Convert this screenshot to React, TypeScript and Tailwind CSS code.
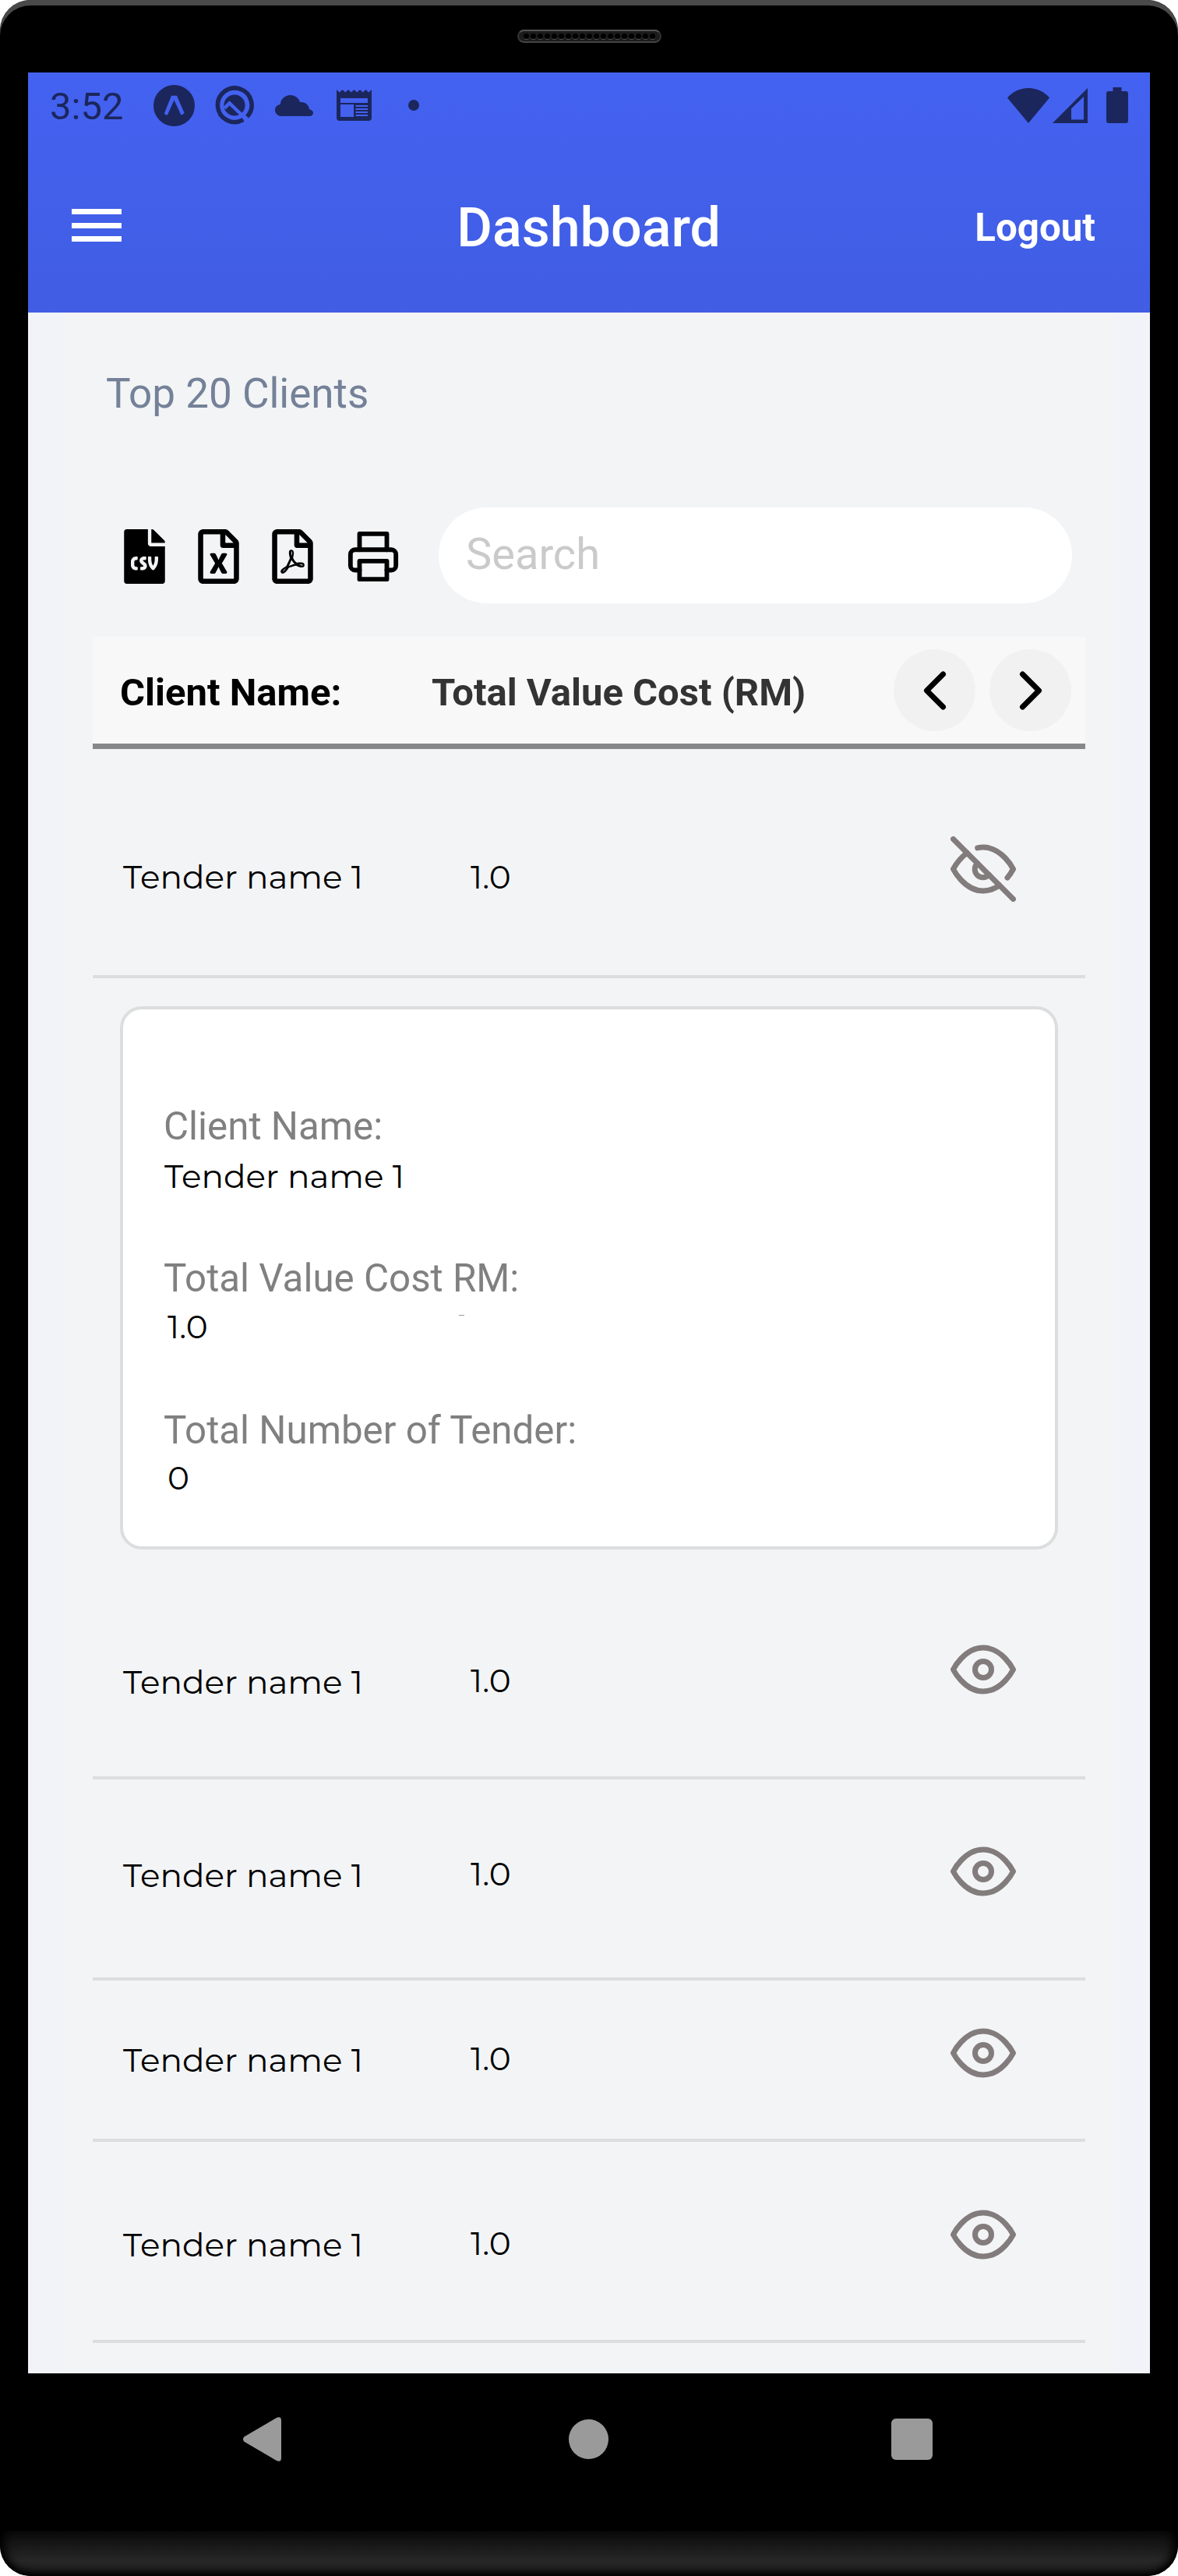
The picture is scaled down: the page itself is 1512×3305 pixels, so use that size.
import { FaFileCsv, FaRegFileExcel, FaRegFilePdf } from "react-icons/fa";
import { FiChevronLeft, FiChevronRight, FiEye, FiEyeOff, FiPrinter } from "react-icons/fi";

type RowProps = {
  height: string;
  namePad: string;
  valuePad: string;
  eyePad: string;
  open?: boolean;
};

const rows: RowProps[] = [
  { height: "h-[295px]", namePad: "pt-[145px]", valuePad: "pt-[143px]", eyePad: "pt-[112px]" },
  { height: "h-[258px]", namePad: "pt-[98px]", valuePad: "pt-[96px]", eyePad: "pt-[76px]" },
  { height: "h-[207px]", namePad: "pt-[77px]", valuePad: "pt-[75px]", eyePad: "pt-[51px]" },
  { height: "h-[258px]", namePad: "pt-[107px]", valuePad: "pt-[105px]", eyePad: "pt-[77px]" },
];

const details = [
  { label: "Client Name:", value: "Tender name 1", indent: "pl-[1px]", gap: "gap-[10px]" },
  { label: "Total Value Cost RM:", value: "1.0", indent: "pl-[5px]", gap: "gap-[8px] mt-[77px]" },
  { label: "Total Number of Tender:", value: "0", indent: "pl-[5px]", gap: "gap-[7px] mt-[79px]" },
];

function TenderRow({ height, namePad, valuePad, eyePad, open }: RowProps) {
  return (
    <div
      className={`flex items-start border-b-4 border-[#dcddde] pl-[39px] font-['Montserrat','Inter',sans-serif] text-[42.200px] leading-[50px] text-black ${height}`}
    >
      <div className={`w-[446px] whitespace-nowrap ${namePad}`}>Tender name 1</div>
      <div className={`w-[616px] ${valuePad}`}>1.0</div>
      <div className={`text-[#827c7c] ${eyePad}`}>{open ? <FiEyeOff size={84} /> : <FiEye size={84} />}</div>
    </div>
  );
}

function Speaker() {
  return (
    <div className="flex h-[17px] w-[185px] items-center justify-center gap-[2px] rounded-full border-2 border-t-[#555] border-b-[#444] border-x-[#333] bg-[#1c1c1c]">
      {Array.from({ length: 19 }, (_, i) => (
        <span key={i} className="h-[8px] w-[7px] rounded-full border-b border-[#555] bg-black" />
      ))}
    </div>
  );
}

function StatusBar() {
  return (
    <div className="flex h-[84px] items-center justify-between pr-[28px] pl-[28px] text-[#1b265c]">
      <div className="flex items-center">
        <span className="w-[133px] pt-[3px] text-[49px] leading-[58px]">3:52</span>
        <svg width="53" height="53" viewBox="0 0 53 53">
          <circle cx="26.5" cy="26.5" r="26.5" fill="currentColor" />
          <path d="M13.700 37 23 13.700H30L39.700 36.300 35.500 38.800 26.500 19.500 17.700 39z" fill="#4361ee" />
        </svg>
        <svg className="ml-[26px]" width="50" height="50" viewBox="0 0 50 50">
          <path d="M36.2 43.6A21.8 21.8 0 1 1 41.2 39.6" fill="none" stroke="currentColor" strokeWidth="5.6" />
          <circle cx="25" cy="25" r="13.6" fill="currentColor" />
          <path d="M12.2 28.6 18.6 22.4 38 41" fill="none" stroke="#4361ee" strokeWidth="4.4" />
        </svg>
        <svg className="ml-[27px]" width="49" height="27" viewBox="0 0 49 27">
          <path
            d="M8.5 27C3.8 27 0 23.7 0 19.2 0 15.3 3 12.6 6.8 12 7 5 13 0 19.8 0 25.5 0 30.3 3.700 32 9 38.700 8.200 43.500 12.500 44 18.200 47 18.700 49 20.600 49 22.800 49 25.300 47 27 44.500 27z"
            fill="currentColor"
          />
        </svg>
        <svg className="ml-[30px]" width="45" height="40" viewBox="0 0 45 40">
          <path
            fillRule="evenodd"
            d="M0 0 3.700 3.500 7.500 0 11.200 3.500 15 0 18.700 3.500 22.500 0 26.200 3.500 30 0 33.700 3.500 37.500 0 41.200 3.500 45 0V36Q45 40 41 40H4Q0 40 0 36zM5 11V17H40V11zM5 19V35H22V19z"
            fill="currentColor"
          />
          <path d="M24.500 21H40M24.500 25H40M24.500 29H40M24.500 33H40" stroke="#4361ee" strokeWidth="2.200" />
        </svg>
        <span className="ml-[47px] size-[14px] rounded-full bg-[#1b265c]" />
      </div>
      <div className="flex items-center">
        <svg width="54" height="45" viewBox="0 0 54 45">
          <path d="M27 45 0 12.500C6 5 16 0 27 0S48 5 54 12.500z" fill="currentColor" />
        </svg>
        <svg className="ml-[4px]" width="45" height="45" viewBox="0 0 45 45">
          <path fillRule="evenodd" d="M0 45 45 0V45zM24 26.500V40.500H40V11z" fill="currentColor" />
        </svg>
        <svg className="ml-[24px]" width="28" height="46" viewBox="0 0 28 46">
          <path d="M8.500 0H19.500V5H25Q28 5 28 8V43Q28 46 25 46H3Q0 46 0 43V8Q0 5 3 5H8.500z" fill="currentColor" />
        </svg>
      </div>
    </div>
  );
}

function AppBar() {
  return (
    <div className="flex h-[224px] items-center justify-between pr-[70px] pl-[56px] text-white">
      <div className="flex w-[168px] flex-col gap-[10.500px]">
        <span className="h-[7px] w-[64px] bg-white" />
        <span className="h-[7px] w-[64px] bg-white" />
        <span className="h-[7px] w-[64px] bg-white" />
      </div>
      <h1 className="pt-[6px] text-[70px] leading-[84px] font-medium">Dashboard</h1>
      <button className="pt-[5px] text-[49.300px] leading-[58px] font-bold">Logout</button>
    </div>
  );
}

function Toolbar() {
  return (
    <div className="mt-[114px] flex h-[123px] items-center pr-[17px] pl-[40px] text-black">
      <div className="flex w-[404px] items-center pt-[2px]">
        <FaFileCsv className="h-[70px] w-[53px]" />
        <FaRegFileExcel className="ml-[42px] h-[70px] w-[53px]" />
        <FaRegFilePdf className="ml-[42px] h-[70px] w-[53px]" />
        <FiPrinter className="ml-[42px]" size={70} />
      </div>
      <div className="flex h-[123px] flex-1 items-center rounded-full bg-white pb-[3px] pl-[35px] text-[56px] leading-[66px] text-[#cacaca]">
        Search
      </div>
    </div>
  );
}

function TableHeader() {
  return (
    <div className="mt-[43px] flex h-[144px] items-center border-b-[7px] border-[#888] bg-[#f8f8f8] pr-[18px] pl-[35px] text-[49px] leading-[58px] font-bold">
      <div className="w-[400px] pt-[6px] text-black">Client Name:</div>
      <div className="flex-1 pt-[6px] text-[#333]">Total Value Cost (RM)</div>
      <div className="flex gap-[18px] text-black">
        <button className="flex size-[105px] items-center justify-center rounded-full bg-[#f1f1f1]">
          <FiChevronLeft size={84} />
        </button>
        <button className="flex size-[105px] items-center justify-center rounded-full bg-[#f1f1f1]">
          <FiChevronRight size={84} />
        </button>
      </div>
    </div>
  );
}

function DetailCard() {
  return (
    <div className="relative mt-[36px] ml-[35px] flex h-[697px] w-[1204px] flex-col rounded-[28px] border-4 border-[#dcddde] bg-white pt-[121px] pl-[52px]">
      {details.map((d) => (
        <div key={d.label} className={`flex flex-col ${d.gap}`}>
          <div className="text-[49.300px] leading-[58px] text-[#808080]">{d.label}</div>
          <div className={`font-['Montserrat','Inter',sans-serif] text-[42.200px] leading-[50px] text-black ${d.indent}`}>
            {d.value}
          </div>
        </div>
      ))}
      <span className="absolute top-[392px] left-[431px] h-px w-[7px] bg-[#999]" />
    </div>
  );
}

function NavBar() {
  return (
    <div className="flex h-[168px] items-center pl-[312px] text-[#9a9a9a]">
      <svg width="49" height="57" viewBox="0 0 49 57">
        <path d="M1.200 25.500 43 1Q49-1.500 49 4.500V52.500Q49 58.500 43 56L1.200 31.500Q-1.200 28.500 1.200 25.500z" fill="currentColor" />
      </svg>
      <span className="ml-[369px] size-[51px] rounded-full bg-[#9a9a9a]" />
      <span className="ml-[363px] size-[53px] rounded-[6px] bg-[#9a9a9a]" />
    </div>
  );
}

export default function App() {
  return (
    <div className="w-[1512px] bg-white">
      <div className="flex h-[3305px] w-[1512px] flex-col overflow-hidden rounded-[39px] bg-black font-['Roboto',sans-serif]">
        <div className="flex h-[93px] justify-center rounded-t-[39px] pt-[38px] shadow-[inset_0_7px_0_#4a4a4a]">
          <Speaker />
        </div>
        <div className="mx-[36px] flex h-[2952px] flex-col">
          <header className="bg-linear-to-b from-[#4462f1] to-[#405de3]">
            <StatusBar />
            <AppBar />
          </header>
          <main className="flex-1 border-x-[47px] border-[#f1f3f8] bg-[#f3f4f6] px-[36px]">
            <h2 className="pt-[72px] pl-[17px] text-[53px] leading-[64px] text-[#748198]">Top 20 Clients</h2>
            <Toolbar />
            <TableHeader />
            <TenderRow height="h-[294px]" namePad="pt-[139px]" valuePad="pt-[139px]" eyePad="pt-[112px]" open />
            <DetailCard />
            {rows.map((row, i) => (
              <TenderRow key={i} {...row} />
            ))}
          </main>
        </div>
        <NavBar />
        <div className="mt-auto h-[58px] rounded-b-[39px] bg-linear-to-b from-[#0a0a0a] via-[#272727] via-65% to-[#1c1c1c] shadow-[inset_0_-8px_10px_-4px_#000,inset_12px_0_14px_-6px_#000,inset_-12px_0_14px_-6px_#000]" />
      </div>
    </div>
  );
}
